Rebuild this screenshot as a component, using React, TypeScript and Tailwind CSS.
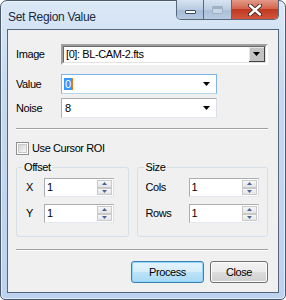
import type { ReactNode } from "react";

const FONT = "font-['Liberation_Sans',Arial,sans-serif]";

function Triangle({ className = "" }: { className?: string }) {
  return (
    <svg width="7" height="4" viewBox="0 0 7 4" className={className}>
      <path d="M0 0H7L3.5 4Z" fill="#000" />
    </svg>
  );
}

function SpinArrow({ up }: { up?: boolean }) {
  return (
    <div className="flex flex-1 items-center justify-center border border-[#c9c9c9] bg-[linear-gradient(180deg,#f7f7f7,#e4e4e4)]">
      <svg width="5" height="3" viewBox="0 0 5 3">
        <path d={up ? "M0 3H5L2.5 0Z" : "M0 0H5L2.5 3Z"} fill="#4a6496" />
      </svg>
    </div>
  );
}

function Spin({ value }: { value: string }) {
  return (
    <div className="flex h-[19px] w-[70px] border border-[#abadb3] border-b-[#e3e9ef] border-r-[#dbdfe6] bg-white">
      <span className="flex-1 pl-[2px] leading-[17px]">{value}</span>
      <div className="flex w-[16px] flex-col py-px pr-px">
        <SpinArrow up />
        <SpinArrow />
      </div>
    </div>
  );
}

function Group({ title, titleGap, className, children }: { title: string; titleGap: string; className: string; children: ReactNode }) {
  return (
    <fieldset className={`rounded-[3px] border border-[#d5dfe5] ${className}`}>
      <legend className={`px-[2px] leading-[13px] ${titleGap}`}>{title}</legend>
      {children}
    </fieldset>
  );
}

function Row({ label, labelW, children, className = "" }: { label: string; labelW: string; children: ReactNode; className?: string }) {
  return (
    <div className={`flex items-center ${className}`}>
      <span className={labelW}>{label}</span>
      {children}
    </div>
  );
}

export default function App() {
  return (
    <div className={`h-[300px] w-[286px] ${FONT} text-[11px] tracking-[-0.4px] text-black`}>
      <div className="flex h-full flex-col rounded-t-[7px] rounded-b-[5px] border border-[#4b5a6c] bg-[linear-gradient(180deg,#dbe8f6_0%,#c6d9f0_30%,#bcd2ee_100%)] px-[6px] pb-[6px] shadow-[inset_0_0_0_1px_rgba(255,255,255,0.55)]">
        {/* title bar */}
        <div className="flex h-[28px] items-start justify-between">
          <span className="mt-[7px] pl-px text-[12px] tracking-[-0.3px] text-[#1b2a3d]">Set Region Value</span>
          <div className="-mt-px flex h-[20px] overflow-hidden rounded-b-[5px] border border-t-0 border-[#59687b]">
            <div className="flex w-[27px] items-end justify-center border-r border-[#59687b] bg-[linear-gradient(180deg,#d7e3f1_0%,#b9cbe2_50%,#a5bbd7_51%,#b4c8e0_100%)] pb-[5px]">
              <div className="h-[4px] w-[11px] rounded-[1px] border border-[#3b4b60] bg-white" />
            </div>
            <div className="flex w-[28px] items-center justify-center border-r border-[#59687b] bg-[linear-gradient(180deg,#d7e3f1_0%,#bccde3_50%,#aabfd9_51%,#b8cbe2_100%)]">
              <div className="h-[8px] w-[11px] rounded-[1px] border border-[#9fb0c5] bg-[#c9d6e6] shadow-[inset_0_2px_0_#9fb0c5]" />
            </div>
            <div className="flex w-[46px] items-center justify-center bg-[linear-gradient(180deg,#e49a8a_0%,#d2664f_45%,#c13a22_50%,#d0553b_100%)]">
              <svg width="14" height="12" viewBox="0 0 14 12">
                <path d="M2 1.5L12 10.5M12 1.5L2 10.5" stroke="#3b2420" strokeWidth="4.2" strokeLinecap="round" />
                <path d="M2 1.5L12 10.5M12 1.5L2 10.5" stroke="#fff" strokeWidth="2.4" strokeLinecap="round" />
              </svg>
            </div>
          </div>
        </div>

        {/* client area */}
        <div className="flex flex-1 flex-col border border-[#55667a] bg-[#f0f0f0] pl-[8px] pr-[10px] pt-[14px]">
          <Row label="Image" labelW="w-[45px]">
            <div className="flex h-[21px] flex-1 border-2 border-l-[#a0a0a0] border-t-[#a0a0a0] border-b-white border-r-white">
              <div className="flex flex-1 border border-l-[#696969] border-t-[#696969] border-b-[#e3e3e3] border-r-[#e3e3e3] bg-white">
                <span className="flex-1 pl-[2px] leading-[15px]">[0]: BL-CAM-2.fts</span>
                <div className="flex w-[16px] items-center justify-center border-r border-b border-r-[#404040] border-b-[#404040] bg-[#c3c3c3] shadow-[inset_1px_1px_0_#e8e8e8]">
                  <Triangle />
                </div>
              </div>
            </div>
          </Row>
          <Row label="Value" labelW="w-[45px]" className="mt-[9px]">
            <div className="flex h-[20px] w-[156px] items-center border border-[#7eb4ea] border-b-[#b7d9ed] bg-white pl-[2px] pr-[6px]">
              <span className="flex-1">
                <span className="border-r border-[#e07a1c] bg-[#3399ff] px-px text-white">0</span>
              </span>
              <Triangle />
            </div>
          </Row>
          <Row label="Noise" labelW="w-[45px]" className="mt-[4px]">
            <div className="flex h-[20px] w-[156px] items-center border border-[#abadb3] border-b-[#e3e9ef] border-r-[#dbdfe6] bg-white pl-[3px] pr-[6px]">
              <span className="flex-1">8</span>
              <Triangle />
            </div>
          </Row>

          <div className="mt-[10px] h-[2px] border-t border-b border-t-[#a0a0a0] border-b-white" />

          <div className="mt-[12px] flex h-[13px] items-center leading-[13px]">
            <div className="h-[13px] w-[13px] border border-[#8e8f8f] bg-white p-px">
              <div className="h-full w-full border border-[#c8c8c8] bg-[linear-gradient(135deg,#d4d4d4,#f6f6f6)]" />
            </div>
            <span className="ml-[3px]">Use Cursor ROI</span>
          </div>

          <div className="mt-[6px] flex gap-[8px]">
            <Group title="Offset" titleGap="-ml-[4px]" className="w-[113px] pb-[13px] pl-[9px] pt-[4px]">
              <Row label="X" labelW="w-[18px]">
                <Spin value="1" />
              </Row>
              <Row label="Y" labelW="w-[18px]" className="mt-[7px]">
                <Spin value="1" />
              </Row>
            </Group>
            <Group title="Size" titleGap="-ml-[2px]" className="w-[132px] pb-[13px] pl-[8px] pt-[4px]">
              <Row label="Cols" labelW="w-[43px]">
                <Spin value="1" />
              </Row>
              <Row label="Rows" labelW="w-[43px]" className="mt-[7px]">
                <Spin value="1" />
              </Row>
            </Group>
          </div>

          <div className="mt-[12px] h-[2px] border-t border-b border-t-[#a0a0a0] border-b-white" />

          <div className="mt-[10px] flex justify-end gap-[6px]">
            <button className="h-[22px] w-[73px] rounded-[3px] border border-[#3c7fb1] bg-[linear-gradient(180deg,#e5f4fc_0%,#d4edfb_50%,#bde3f9_51%,#a7d9f5_100%)] shadow-[inset_0_0_0_1px_#8fd6f9] tracking-[-0.4px]">
              Process
            </button>
            <button className="h-[22px] w-[58px] rounded-[3px] border border-[#707070] bg-[linear-gradient(180deg,#f2f2f2_0%,#ebebeb_50%,#dddddd_51%,#cfcfcf_100%)] shadow-[inset_0_0_0_1px_#fcfcfc] tracking-[-0.4px]">
              Close
            </button>
          </div>
        </div>
      </div>
    </div>
  );
}
